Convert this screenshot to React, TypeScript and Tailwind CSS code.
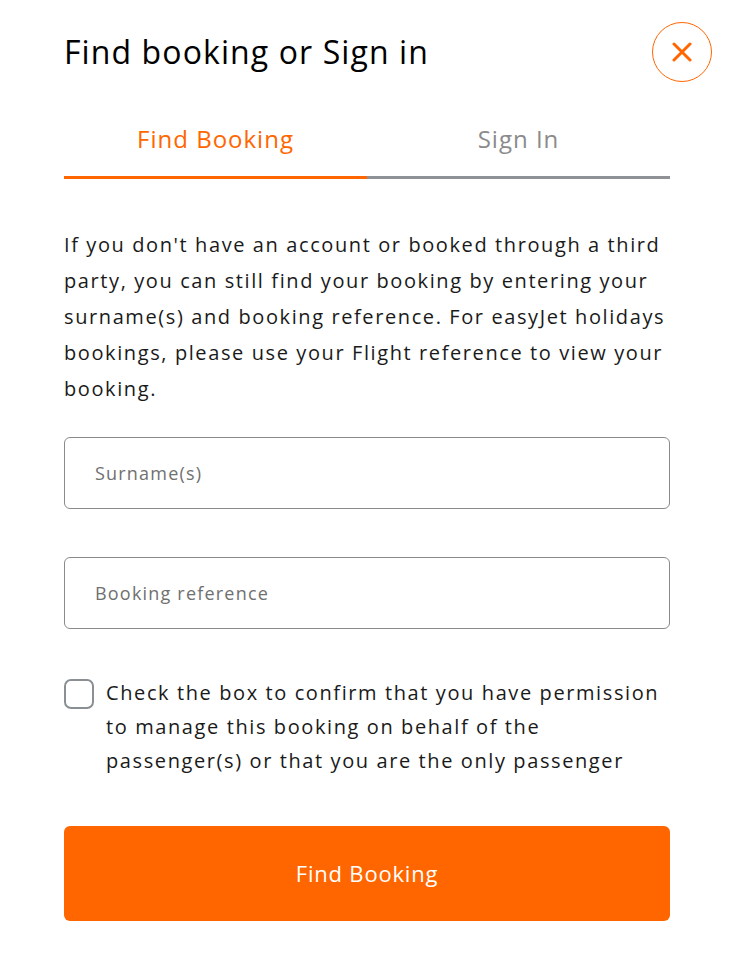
export default function App() {
  return (
    <div className="min-h-screen bg-white font-['Open_Sans',sans-serif] text-[#1a1a1a]">
      <div className="pl-[64px] pr-[62px] pt-[22px] pb-[40px]">
        <div className="flex items-center justify-between -mr-[42px]">
          <h1 className="text-[32px] leading-[60px] tracking-[1.1px] text-black">Find booking or Sign in</h1>
          <button className="w-[60px] h-[60px] rounded-full border border-[#ff6600] flex items-center justify-center">
            <svg width="20" height="20" viewBox="0 0 20 20">
              <path d="M2 2 L18 18 M18 2 L2 18" stroke="#ff6600" strokeWidth="3" strokeLinecap="round" />
            </svg>
          </button>
        </div>

        <div className="mt-[20px] grid grid-cols-2">
          <div className="flex items-center justify-center h-[77px] border-b-[3px] border-[#ff6600] text-[24px] tracking-[1px] text-[#ff6600]">
            Find Booking
          </div>
          <div className="flex items-center justify-center h-[77px] border-b-[3px] border-[#8e9196] text-[24px] tracking-[1px] text-[#8b8b8b]">
            Sign In
          </div>
        </div>

        <p className="mt-[48px] text-[20px] leading-[36px] tracking-[1.6px] text-[#1a1a1a]">
          If you don't have an account or booked through a third party, you can still find your booking by entering your surname(s) and booking reference. For easyJet holidays bookings, please use your Flight reference to view your booking.
        </p>

        <div className="mt-[30px] flex flex-col gap-[48px]">
          <input
            placeholder="Surname(s)"
            className="h-[72px] w-full rounded-[6px] border border-[#8a8a8a] px-[30px] text-[18px] tracking-[1.2px] placeholder:text-[#707070] outline-none"
          />
          <input
            placeholder="Booking reference"
            className="h-[72px] w-full rounded-[6px] border border-[#8a8a8a] px-[30px] text-[18px] tracking-[1.2px] placeholder:text-[#707070] outline-none"
          />
        </div>

        <label className="mt-[50px] flex items-start gap-[12px]">
          <span className="w-[30px] h-[30px] shrink-0 rounded-[7px] border-2 border-[#8a8f94]"></span>
          <span className="text-[20px] leading-[34px] tracking-[1.6px] -mt-[3px]">
            Check the box to confirm that you have permission to manage this booking on behalf of the passenger(s) or that you are the only passenger
          </span>
        </label>

        <button className="mt-[48px] w-full h-[95px] rounded-[6px] bg-[#ff6600] text-white text-[22px] tracking-[0.8px]">
          Find Booking
        </button>
      </div>
    </div>
  );
}
